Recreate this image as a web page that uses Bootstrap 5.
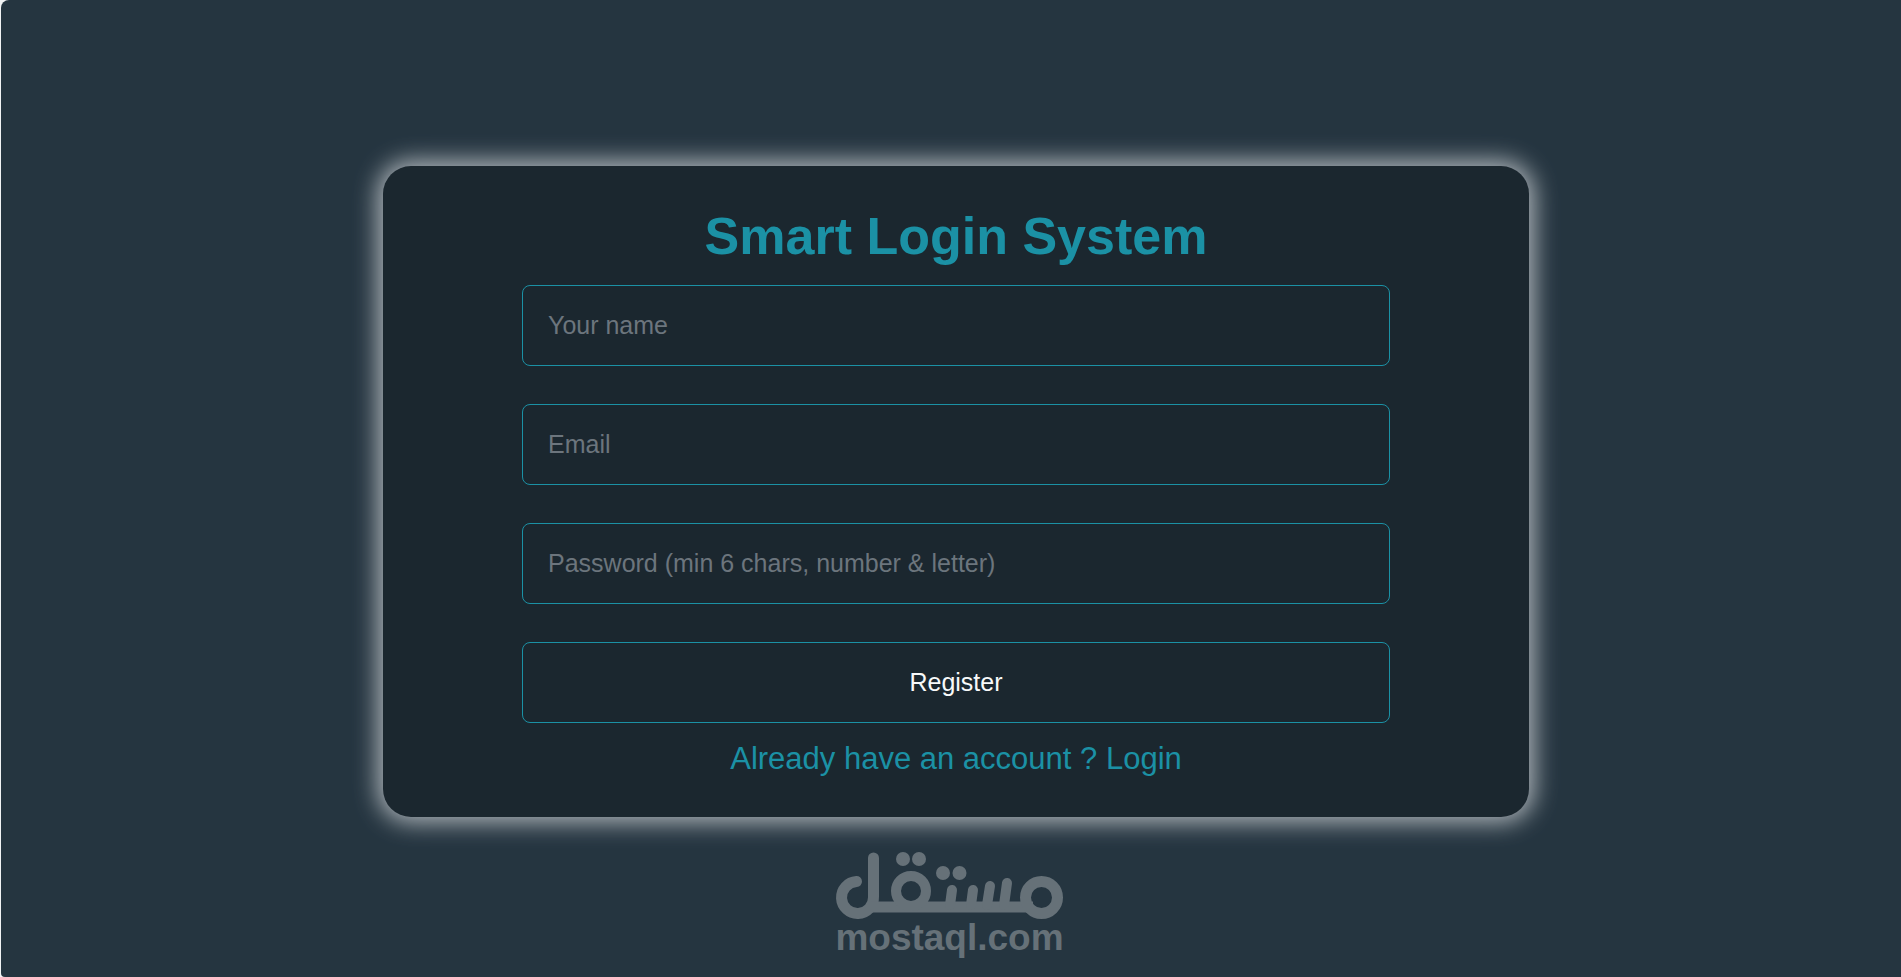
<!DOCTYPE html>
<html lang="en">
<head>
<meta charset="utf-8">
<meta name="viewport" content="width=device-width, initial-scale=1">
<title>Smart Login System</title>
<link href="https://cdn.jsdelivr.net/npm/bootstrap@5.3.0/dist/css/bootstrap.min.css" rel="stylesheet">
<style>
  :root { --teal: #1b91a5; --panel: #1b272f; --page: #253540; --ghost: #6c757d; }
  body { background: #f1f3f4; font-family: "Liberation Sans", Arial, sans-serif; }
  .app-frame { background: var(--page); border-radius: 8px 0 0 4px; margin-left: 1px; }
  .app-main { padding: 166px 0 35px 10px; }
  .login-panel { max-width: 1146px; padding: 40px 24px 34px; background: var(--panel); border-radius: 28px; box-shadow: 0 0 24px 5px rgba(233, 236, 239, .72); color: var(--teal); }
  .login-title { font-size: 52px; line-height: 60px; font-weight: 700; margin-bottom: 19px; }
  .login-form { max-width: 868px; gap: 38px; }
  .login-form .form-control, .login-form .btn { height: 81px; padding: 0 25px; font-size: 25px; border: 1px solid var(--teal); border-radius: 8px; background: transparent; color: #f8f9fa; }
  .login-form .form-control::placeholder { color: var(--ghost); opacity: 1; }
  .login-form .btn:hover { background: var(--teal); }
  .login-switch { font-size: 31px; line-height: 48px; margin-top: 12px; }
  .login-switch a { color: inherit; }
  .brand-mark { color: #667178; width: 229px; margin-right: 3px; }
  .brand-name { font-size: 37px; line-height: 36px; font-weight: 700; }
</style>
</head>
<body>
<div class="app-frame min-vh-100 d-flex flex-column">
  <main class="app-main d-flex justify-content-center">
    <section class="login-panel w-100 text-center">
      <h1 class="login-title">Smart Login System</h1>
      <form class="login-form d-flex flex-column mx-auto">
        <input type="text" class="form-control" placeholder="Your name" aria-label="Your name">
        <input type="email" class="form-control" placeholder="Email" aria-label="Email">
        <input type="password" class="form-control" placeholder="Password (min 6 chars, number &amp; letter)" aria-label="Password">
        <button type="submit" class="btn w-100">Register</button>
      </form>
      <p class="login-switch mb-0">Already have an account ? <a href="#" class="text-decoration-none">Login</a></p>
    </section>
  </main>
  <footer class="d-flex justify-content-center">
    <div class="brand-mark text-center">
      <svg class="d-block w-100" viewBox="0 0 229 68" fill="none" stroke="currentColor" stroke-width="11" stroke-linecap="round" role="img" aria-label="mostaql">
        <path d="M21.500 29.500A16 16 0 1 0 38.500 45V6"/>
        <path d="M36 55H198" stroke-linecap="butt"/>
        <circle cx="76" cy="39" r="15" stroke-width="10"/>
        <circle cx="206.500" cy="45.500" r="16"/>
        <path stroke-width="10" d="M117 38l-2 15M138 38l-2 15M155 34l-3 19M172 31l-3 22"/>
        <g fill="currentColor" stroke="none"><circle cx="68" cy="7" r="7"/><circle cx="84" cy="7" r="7"/><circle cx="108" cy="21" r="7"/><circle cx="124.500" cy="21" r="7"/></g>
      </svg>
      <div class="brand-name">mostaql.com</div>
    </div>
  </footer>
</div>
<script src="https://cdn.jsdelivr.net/npm/bootstrap@5.3.0/dist/js/bootstrap.bundle.min.js"></script>
</body>
</html>
